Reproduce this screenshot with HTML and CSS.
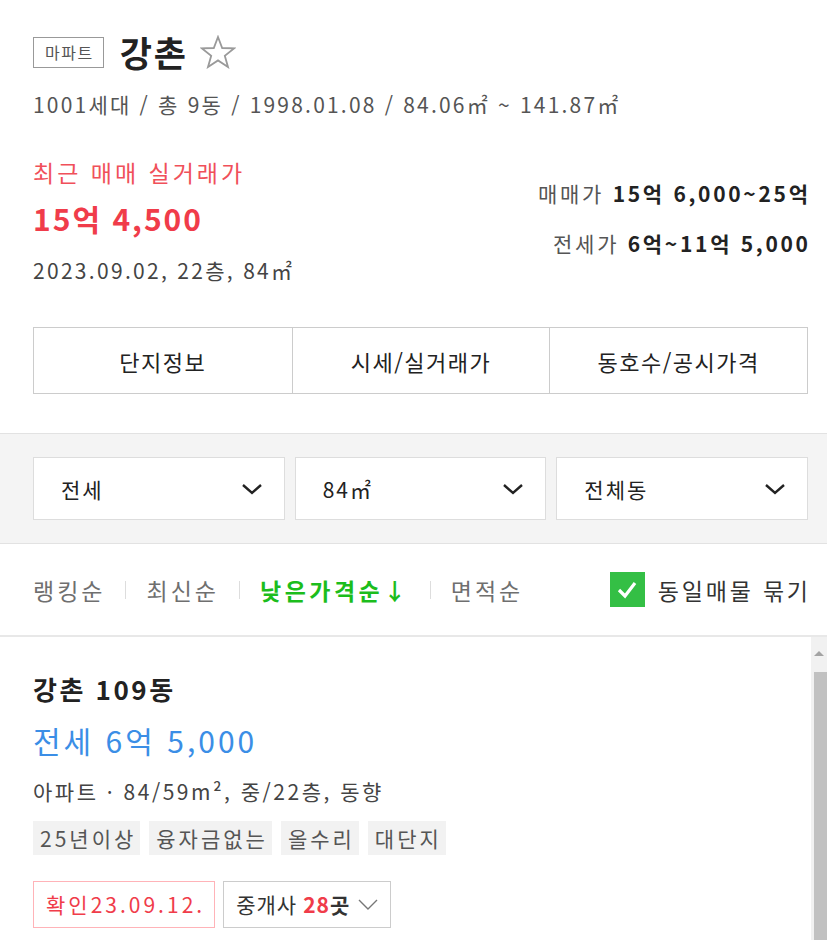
FILE: index.html
```html
<!DOCTYPE html>
<html lang="ko">
<head>
  <meta charset="UTF-8">
  <meta name="viewport" content="width=device-width, initial-scale=1.0">
  <title>강촌 - 단지 정보</title>
  <link rel="stylesheet" href="styles.css">
</head>
<body>
  <div class="complex">
    <div class="complex-title">
      <span class="type-badge">마파트</span>
      <h1>강촌</h1>
      <svg class="star" width="36" height="34" viewBox="0 0 36 34">
        <path d="M18 2 L22.2 13 L34 13.4 L24.8 20.8 L28 32 L18 25.4 L8 32 L11.2 20.8 L2 13.4 L13.8 13 Z" fill="none" stroke="#9a9a9a" stroke-width="1.8" stroke-linejoin="miter"/>
      </svg>
    </div>
    <p class="complex-summary">1001세대 / 총 9동 / 1998.01.08 / 84.06㎡ ~ 141.87㎡</p>

    <div class="price-block">
      <div class="recent-deal">
        <div class="recent-label">최근 매매 실거래가</div>
        <div class="recent-price">15억 4,500</div>
        <div class="recent-info">2023.09.02, 22층, 84㎡</div>
      </div>
      <div class="price-range">
        <div><span class="range-label">매매가</span> <strong>15억 6,000~25억</strong></div>
        <div><span class="range-label">전세가</span> <strong>6억~11억 5,000</strong></div>
      </div>
    </div>

    <div class="tabs">
      <button class="tab">단지정보</button>
      <button class="tab">시세/실거래가</button>
      <button class="tab">동호수/공시가격</button>
    </div>
  </div>

  <div class="filters">
    <button class="select">전세 <svg class="chev" width="22" height="12" viewBox="0 0 22 12"><path d="M2 2 L11 10 L20 2" fill="none" stroke="#222" stroke-width="2.4"/></svg></button>
    <button class="select">84㎡ <svg class="chev" width="22" height="12" viewBox="0 0 22 12"><path d="M2 2 L11 10 L20 2" fill="none" stroke="#222" stroke-width="2.4"/></svg></button>
    <button class="select">전체동 <svg class="chev" width="22" height="12" viewBox="0 0 22 12"><path d="M2 2 L11 10 L20 2" fill="none" stroke="#222" stroke-width="2.4"/></svg></button>
  </div>

  <div class="sort-bar">
    <div class="sort-list">
      <a class="sort">랭킹순</a>
      <span class="sep"></span>
      <a class="sort">최신순</a>
      <span class="sep"></span>
      <a class="sort active">낮은가격순↓</a>
      <span class="sep"></span>
      <a class="sort">면적순</a>
    </div>
    <label class="group-check">
      <span class="checkbox">
        <svg width="24" height="20" viewBox="0 0 24 20"><path d="M4 10 L10 16 L20 3" fill="none" stroke="#fff" stroke-width="3.2"/></svg>
      </span>
      동일매물 묶기
    </label>
  </div>

  <div class="listing-area">
    <div class="listings">
      <div class="item">
        <div class="item-title">강촌 109동</div>
        <div class="item-price">전세 6억 5,000</div>
        <div class="item-spec">아파트 · 84/59m², 중/22층, 동향</div>
        <div class="tags">
          <span class="tag">25년이상</span>
          <span class="tag">융자금없는</span>
          <span class="tag">올수리</span>
          <span class="tag">대단지</span>
        </div>
        <div class="item-footer">
          <span class="confirm">확인23.09.12.</span>
          <span class="agents">중개사 <b class="red">28</b><b>곳</b>
            <svg width="20" height="11" viewBox="0 0 20 11"><path d="M1 1 L10 10 L19 1" fill="none" stroke="#777" stroke-width="1.4"/></svg>
          </span>
        </div>
      </div>
    </div>
    <div class="scrollbar">
      <div class="scroll-up"></div>
      <div class="scroll-thumb"></div>
    </div>
  </div>
</body>
</html>
```

FILE: styles.css
```css
html, body {
  height: 100%;
}

body {
  margin: 0;
  font-family: "Noto Sans CJK KR", "Noto Sans", sans-serif;
  color: #222;
  background: #fff;
  display: flex;
  flex-direction: column;
  overflow: hidden;
}

.complex {
  padding: 32px 19px 0 33px;
}

.complex-title {
  display: flex;
  align-items: center;
  height: 40px;
}

.type-badge {
  border: 1px solid #999;
  color: #555;
  font-size: 16px;
  letter-spacing: 1.5px;
  line-height: 29px;
  padding: 0 9px 0 11px;
  margin-right: 16px;
}

.complex-title h1 {
  margin: 0;
  font-size: 35px;
  letter-spacing: 2px;
  font-weight: bold;
  line-height: 40px;
  margin-right: 12px;
}

.star {
  display: block;
}

.complex-summary {
  margin: 18px 0 0;
  font-size: 21px;
  letter-spacing: 2.2px;
  line-height: 28px;
  color: #555;
}

.price-block {
  display: flex;
  justify-content: space-between;
  margin-top: 39px;
}

.recent-label {
  color: #f0505a;
  font-size: 23px;
  letter-spacing: 3px;
  line-height: 30px;
}

.recent-price {
  color: #f03c4a;
  font-size: 30px;
  letter-spacing: 2px;
  font-weight: bold;
  line-height: 40px;
  margin-top: 11px;
}

.recent-info {
  font-size: 21px;
  letter-spacing: 2.3px;
  line-height: 28px;
  color: #444;
  margin-top: 18px;
}

.price-range {
  padding-top: 11px;
  text-align: right;
  font-size: 21px;
  letter-spacing: 2.7px;
  line-height: 50px;
  color: #222;
}

.price-range div {
  margin-right: -2.7px;
}

.range-label {
  color: #555;
}

.tabs {
  display: grid;
  grid-template-columns: repeat(3, 1fr);
  margin: 43px 0 39px;
  border: 1px solid #ccc;
}

.tab {
  height: 65px;
  background: #fff;
  border: none;
  border-left: 1px solid #ccc;
  font-family: inherit;
  font-size: 22px;
  letter-spacing: 1.5px;
  color: #222;
}

.tab:first-child {
  border-left: none;
}

.filters {
  display: grid;
  grid-template-columns: repeat(3, 1fr);
  gap: 10px;
  padding: 23px 19px 23px 33px;
  background: #f4f4f4;
  border-top: 1px solid #e2e2e2;
  border-bottom: 1px solid #e2e2e2;
}

.select {
  display: flex;
  align-items: center;
  justify-content: space-between;
  height: 63px;
  padding: 0 21px 0 27px;
  background: #fff;
  border: 1px solid #ddd;
  font-family: inherit;
  font-size: 21px;
  letter-spacing: 2px;
  color: #222;
}

.sort-bar {
  display: flex;
  align-items: center;
  justify-content: space-between;
  height: 91px;
  padding: 0 19px 0 33px;
  border-bottom: 2px solid #e8e8e8;
}

.sort-list {
  display: flex;
  align-items: center;
}

.sort {
  font-size: 23px;
  letter-spacing: 3px;
  color: #6f6f6f;
}

.sort.active {
  color: #1cbd1c;
  font-weight: bold;
  letter-spacing: 3.5px;
}

.sep {
  width: 1px;
  height: 18px;
  background: #ddd;
  margin: 0 20px;
}

.group-check {
  display: flex;
  align-items: center;
  font-size: 23px;
  letter-spacing: 2.8px;
  color: #333;
  margin-right: -2.8px;
}

.checkbox {
  width: 35px;
  height: 35px;
  background: #34bf45;
  display: flex;
  align-items: center;
  justify-content: center;
  margin-right: 13px;
}

.listing-area {
  flex: 1;
  display: flex;
  min-height: 0;
}

.listings {
  flex: 1;
  padding: 36px 0 0 33px;
}

.item-title {
  font-size: 26px;
  letter-spacing: 2.5px;
  font-weight: bold;
  line-height: 32px;
}

.item-price {
  margin-top: 15px;
  font-size: 30px;
  letter-spacing: 3px;
  line-height: 40px;
  color: #3b8ee6;
}

.item-spec {
  margin-top: 17px;
  font-size: 21px;
  letter-spacing: 2.5px;
  line-height: 28px;
  color: #444;
}

.tags {
  display: flex;
  gap: 9px;
  margin-top: 16px;
}

.tag {
  background: #f2f2f2;
  color: #555;
  font-size: 21px;
  letter-spacing: 3px;
  line-height: 34px;
  padding: 0 4px 0 7px;
}

.item-footer {
  display: flex;
  gap: 8px;
  margin-top: 26px;
}

.confirm {
  border: 1px solid #ffb3b8;
  color: #f03c4a;
  font-size: 21px;
  letter-spacing: 3px;
  line-height: 45px;
  padding: 0 9px 0 12px;
}

.agents {
  display: flex;
  align-items: center;
  border: 1px solid #ccc;
  font-size: 21px;
  letter-spacing: 1px;
  line-height: 45px;
  padding: 0 12px;
  color: #333;
}

.agents .red {
  color: #f03c4a;
  margin-left: 6px;
}

.agents svg {
  margin-left: 8px;
}

.scrollbar {
  width: 16px;
  background: #f1f1f1;
  display: flex;
  flex-direction: column;
  align-items: flex-end;
}

.scroll-up {
  width: 0;
  height: 0;
  margin: 14px 3px 0 0;
  border-left: 5px solid transparent;
  border-right: 5px solid transparent;
  border-bottom: 5px solid #a3a3a3;
}

.scroll-thumb {
  flex: 1;
  width: 13px;
  margin-top: 16px;
  background: #c1c1c1;
}
```
